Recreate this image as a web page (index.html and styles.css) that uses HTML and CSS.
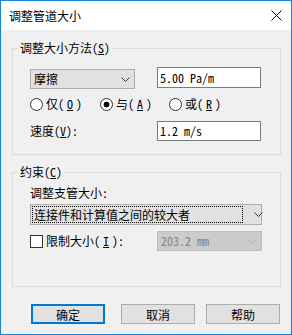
FILE: index.html
```html
<!DOCTYPE html>
<html lang="zh-CN">
<head>
    <meta charset="UTF-8">
    <title>调整管道大小</title>
    <link rel="stylesheet" href="styles.css">
</head>
<body>
<div class="dialog">
    <div class="titlebar">
        <span class="title">调整管道大小</span>
        <svg class="close" width="11" height="11" viewBox="0 0 11 11"><path d="M0.5 0.5 L10.5 10.5 M10.5 0.5 L0.5 10.5" stroke="#000" stroke-width="1" fill="none"/></svg>
    </div>

    <div class="group group-method">
        <div class="group-title">调整大小方法(<u>S</u>)</div>
        <div class="method-grid">
            <div class="combo combo-method">
                <span class="combo-text">摩擦</span>
                <svg class="arrow" width="9" height="5" viewBox="0 0 9 5"><path d="M0.5 0.5 L4.5 4.5 L8.5 0.5" stroke="#333" fill="none"/></svg>
            </div>
            <div class="textbox mono">5.00 Pa/m</div>

            <div class="radios">
                <label class="radio-item radio-first"><span class="radio"></span>仅(<u>O</u>)</label>
                <label class="radio-item radio-second"><span class="radio checked"></span>与(<u>A</u>)</label>
                <label class="radio-item"><span class="radio"></span>或(<u>R</u>)</label>
            </div>

            <div class="field-label">速度(<u>V</u>):</div>
            <div class="textbox textbox-speed mono">1.2 m/s</div>
        </div>
    </div>

    <div class="group group-limit">
        <div class="group-title">约束(<u>C</u>)</div>
        <div class="field-label branch-label">调整支管大小:</div>
        <div class="combo combo-branch">
            <span class="combo-text focus">连接件和计算值之间的较大者</span>
            <svg class="arrow" width="9" height="5" viewBox="0 0 9 5"><path d="M0.5 0.5 L4.5 4.5 L8.5 0.5" stroke="#333" fill="none"/></svg>
        </div>
        <div class="limit-row">
            <label class="check-item"><span class="checkbox"></span>限制大小(<u>I</u>):</label>
            <div class="combo combo-size disabled">
                <span class="combo-text mono">203.2 mm</span>
                <svg class="arrow" width="9" height="5" viewBox="0 0 9 5"><path d="M0.5 0.5 L4.5 4.5 L8.5 0.5" stroke="#b0b0b0" fill="none"/></svg>
            </div>
        </div>
    </div>

    <div class="buttons">
        <button class="btn btn-default">确定</button>
        <button class="btn btn-cancel">取消</button>
        <button class="btn">帮助</button>
    </div>
</div>
</body>
</html>
```

FILE: styles.css
```css
body { margin: 0; background: #fff; font-family: "Noto Sans Mono CJK SC", "Noto Sans CJK SC", sans-serif; font-size: 12px; color: #000; }
.mono { font-family: "Noto Sans Mono CJK SC", "Liberation Mono", monospace; }

.dialog { width: 292px; height: 335px; box-sizing: border-box; border: 1px solid #1883d7; background: #f0f0f0; display: flex; flex-direction: column; }
.titlebar { height: 29px; flex: none; background: #fff; display: flex; align-items: center; padding: 0 9px 0 8px; }
.title { flex: 1; font-family: "Noto Sans CJK SC", sans-serif; font-size: 12px; line-height: 29px; }
.close { display: block; }

/* Group boxes */
.group { border: 1px solid #dcdcdc; margin: 18px 10px 0 11px; padding: 0 19px 13px 17px; line-height: 14px; }
.group-limit { margin-top: 17px; padding-bottom: 35px; }
.group-title { width: fit-content; margin: -8px 0 0 -12px; padding: 0 2px; background: #f0f0f0; line-height: 14px; }

.method-grid { display: grid; grid-template-columns: 105px 104px; column-gap: 22px; margin-top: 12px; align-items: start; }

/* Combos and text boxes */
.combo { box-sizing: border-box; display: flex; align-items: center; border: 1px solid #adadad; background: #e1e1e1; }
.combo-text { flex: 1; white-space: nowrap; line-height: 16px; }
.combo .arrow { flex: none; display: block; }
.combo-method { height: 20px; margin-top: 2px; padding: 0 4px 0 2px; }
.combo-method .combo-text { padding-left: 1px; }
.combo-branch { height: 21px; margin: 4px -1px 0 0; padding: 0 5px 0 1px; }
.combo-branch .focus { flex: none; width: 208px; height: 15px; line-height: 15px; border: 1px dotted #000; padding-left: 1px; margin-right: 11px; }
.combo-size { width: 105px; height: 20px; margin-right: -1px; padding: 0 5px 0 3px; }
.disabled { background: #cccccc; border-color: #bfbfbf; color: #838383; }

.textbox { box-sizing: border-box; height: 21px; line-height: 19px; border: 1px solid #7a7a7a; background: #fff; padding-left: 2px; white-space: nowrap; }
.textbox-speed { height: 20px; line-height: 18px; }

/* Radios */
.radios { grid-column: 1 / 3; display: flex; align-items: center; height: 16px; margin: 7px 0 9px; }
.radio-item, .check-item { display: flex; align-items: center; gap: 3px; }
.radio-first { width: 70px; }
.radio-second { width: 69px; }
.radio { box-sizing: border-box; width: 13px; height: 13px; border: 1px solid #333; border-radius: 50%; background: #fff; }
.radio.checked { background: radial-gradient(circle, #000 0 2.6px, #fff 3.2px); }

.field-label { line-height: 20px; }
.branch-label { margin-top: 7px; line-height: 14px; }

/* Limit row */
.limit-row { display: flex; align-items: center; justify-content: space-between; margin-top: 6px; }
.checkbox { box-sizing: border-box; width: 13px; height: 13px; border: 1px solid #333; background: #fff; }

/* Buttons */
.buttons { display: flex; justify-content: flex-end; margin-top: 17px; padding-right: 11px; }
.btn { box-sizing: border-box; width: 74px; height: 20px; padding: 0; border: 1px solid #adadad; background: #e1e1e1; font: inherit; font-family: "Noto Sans CJK SC", sans-serif; font-size: 12px; color: #000; }
.btn-default { border: 2px solid #0078d7; margin-right: 16px; }
.btn-cancel { margin-right: 11px; }
```
